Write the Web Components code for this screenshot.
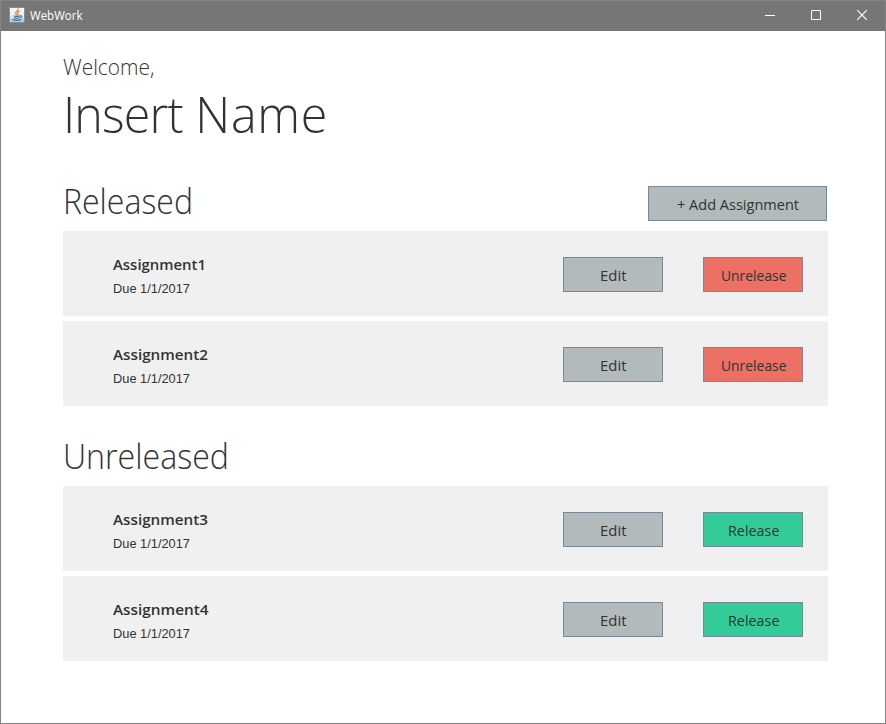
<!DOCTYPE html>
<html lang="en"><head><meta charset="utf-8"><title>WebWork</title>
<style>html,body{margin:0;height:100%;overflow:hidden}body{background:#fff;font-family:"Open Sans","Noto Sans",sans-serif;color:#333}</style></head>
<body>
<app-window heading="WebWork">
  <welcome-banner name="Insert Name"></welcome-banner>
  <assignment-section heading="Released" fit="130">
    <ui-button slot="action" size="wide" fit="122">+ Add Assignment</ui-button>
    <assignment-card name="Assignment1" fit="93" due="1/1/2017" action="Unrelease"></assignment-card>
    <assignment-card name="Assignment2" fit="95" due="1/1/2017" action="Unrelease"></assignment-card>
  </assignment-section>
  <assignment-section heading="Unreleased" fit="166">
    <assignment-card name="Assignment3" fit="95" due="1/1/2017" action="Release"></assignment-card>
    <assignment-card name="Assignment4" fit="95.5" due="1/1/2017" action="Release"></assignment-card>
  </assignment-section>
</app-window>
<script>
class Base extends HTMLElement{
  connectedCallback(){ if(!this.shadowRoot){ this.attachShadow({mode:'open'}).innerHTML=this.render(); this.ready&&this.ready(); } }
  a(n){ return this.getAttribute(n)||''; }
}
// A single line of text whose advance is condensed or widened to the "width" attribute.
customElements.define('fit-text',class extends Base{
  render(){return `<style>:host{display:block;white-space:nowrap}span{display:inline-block;transform-origin:0 50%}</style><span><slot></slot></span>`}
  ready(){
    const s=this.shadowRoot.querySelector('span'),w=parseFloat(this.a('width')),n=s.getBoundingClientRect().width;
    this.style.width=w+'px';
    if(n) s.style.transform=`scaleX(${w/n})`;
  }
});
customElements.define('java-icon',class extends Base{
  render(){return `<style>:host,svg{display:block;width:16px;height:16px}</style>
  <svg viewBox="0 0 16 16"><defs><linearGradient id="g" x2="0" y2="1"><stop stop-color="#f7fafc"/><stop offset=".55" stop-color="#e4edf3"/><stop offset="1" stop-color="#a9c1d3"/></linearGradient></defs>
  <rect x=".5" y=".5" width="15" height="15" rx="1" fill="url(#g)" stroke="#7893a8"/>
  <g fill="none" stroke-linecap="round"><path d="M9.3 1.9C9.5 4 5.8 4.6 6.7 6.6L7.8 8.2M10.6 4.3C8.6 5.2 8.2 5.8 9 6.7L8.7 8.2" stroke="#e87d2b" stroke-width="1.2"/>
  <path d="M5 9.1Q7.5 9.9 10.5 9.1M5.5 10.9Q8 11.6 10 10.9M3.6 12.6Q8 14.2 12.2 12.6M11.3 8.8C13.3 8.4 13 10.3 11.3 10.7" stroke="#396b93" stroke-width="1.1"/></g></svg>`}
});
customElements.define('window-control',class extends Base{
  render(){
    const p={min:'<path d="M0 5.5H10"/>',max:'<path d="M.5 .5H9.5V9.5H.5Z"/>',close:'<path d="M.2 .2L9.8 9.8M9.8 .2L.2 9.8" stroke-width="1.15"/>'}[this.a('kind')];
    return `<style>:host{display:flex;width:46px;height:30px;align-items:center;justify-content:center;margin-top:-2px}svg{overflow:visible}</style><svg width="10" height="10" fill="none" stroke="#fff">${p}</svg>`}
});
customElements.define('app-window',class extends Base{
  render(){return `<style>:host{display:flex;flex-direction:column;box-sizing:border-box;width:886px;height:724px;border:1px solid #838383;border-top:0;background:#fff}
  header{display:flex;height:31px;flex:none;box-sizing:border-box;align-items:center;background:#767676;border-top:1px solid #838383;padding-left:8px}
  java-icon{margin-top:-2px}
  fit-text{font-size:12px;line-height:18px;color:#fff;margin-left:5px;flex:none}
  nav{display:flex;margin-left:auto}
  main{display:flow-root;padding:20px 57px 0 62px}</style>
  <header><java-icon></java-icon><fit-text width="52.5">${this.a('heading')}</fit-text><nav><window-control kind="min"></window-control><window-control kind="max"></window-control><window-control kind="close"></window-control></nav></header><main><slot></slot></main>`}
});
customElements.define('welcome-banner',class extends Base{
  render(){
    const [first,...rest]=this.a('name').split(' ');
    return `<style>:host{display:block;height:125px;font-weight:300}.w{font-size:22px;line-height:30px}.n{font-size:50px;line-height:68px;margin-top:-1px}.first{letter-spacing:-.9px}.rest{letter-spacing:.7px}</style>
  <fit-text class="w" width="91.5">Welcome,</fit-text><fit-text class="n" width="265"><span class="first">${first}</span> <span class="rest">${rest.join(' ')}</span></fit-text>`}
});
customElements.define('assignment-section',class extends Base{
  render(){return `<style>:host{display:block;margin-bottom:25px}header{display:flex;height:55px;justify-content:space-between;align-items:flex-start}
  .h{font-size:35px;line-height:48px;font-weight:300;padding-top:1px}::slotted([slot=action]){margin:10px 1px 0 0}.list{display:grid;gap:5px}</style>
  <header><fit-text class="h" width="${this.a('fit')}">${this.a('heading')}</fit-text><slot name="action"></slot></header><div class="list"><slot></slot></div>`}
});
customElements.define('ui-button',class extends Base{
  render(){return `<style>:host{display:flex;box-sizing:border-box;width:100px;height:35px;align-items:center;justify-content:center;border:1px solid #778899;background:#b2babb;font-size:15px;line-height:20px;padding:1px 0 0 1px}
  :host([size=wide]){width:179px}:host([tone=danger]){background:#ec7063}:host([tone=success]){background:#33cc99}</style><fit-text width="${this.a('fit')}"><slot></slot></fit-text>`}
});
customElements.define('assignment-card',class extends Base{
  render(){
    const un=this.a('action')==='Unrelease';
    return `<style>:host{display:flex;box-sizing:border-box;height:85px;background:#f0f0f0;padding:0 25px 0 50px;align-items:flex-start}
  .info{flex:1;padding-top:23px}.name{font-size:15px;font-weight:600;line-height:20px}.due{font:13px/18px "Liberation Sans",Arial,sans-serif;margin-top:6px}
  .actions{display:flex;gap:40px;padding-top:26px}</style>
  <div class="info"><fit-text class="name" width="${this.a('fit')}">${this.a('name')}</fit-text><fit-text class="due" width="77">Due ${this.a('due')}</fit-text></div>
  <div class="actions"><ui-button fit="26.5">Edit</ui-button><ui-button tone="${un?'danger':'success'}" fit="${un?65.5:51.5}">${this.a('action')}</ui-button></div>`}
});
</script></body></html>
